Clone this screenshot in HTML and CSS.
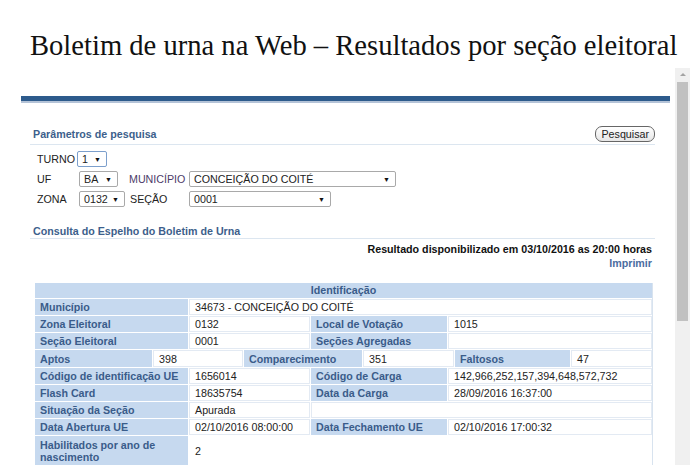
FILE: index.html
```html
<!DOCTYPE html>
<html lang="pt-BR">
<head>
    <meta charset="UTF-8">
    <meta name="viewport" content="width=device-width, initial-scale=1.0">
    <title>Boletim de urna na Web</title>
    <link rel="stylesheet" href="styles.css">
</head>
<body>
    <h1 class="title">Boletim de urna na Web &ndash; Resultados por seção eleitoral</h1>

    <div class="frame">
        <div class="page">
            <div class="topbar"></div>

            <div class="section">
                <div class="section-head">
                    <span>Parâmetros de pesquisa</span>
                    <button class="btn" type="button">Pesquisar</button>
                </div>

                <div class="params">
                    <div class="param-row">
                        <span class="lbl">TURNO</span>
                        <div class="select sel-turno focus"><span>1</span><i>&#9660;</i></div>
                    </div>
                    <div class="param-row">
                        <span class="lbl lbl-first">UF</span>
                        <div class="select sel-uf"><span>BA</span><i>&#9660;</i></div>
                        <span class="lbl lbl-mun">MUNICÍPIO</span>
                        <div class="select sel-mun"><span>CONCEIÇÃO DO COITÉ</span><i>&#9660;</i></div>
                    </div>
                    <div class="param-row">
                        <span class="lbl lbl-first">ZONA</span>
                        <div class="select sel-zona"><span>0132</span><i>&#9660;</i></div>
                        <span class="lbl lbl-secao">SEÇÃO</span>
                        <div class="select sel-secao"><span>0001</span><i>&#9660;</i></div>
                    </div>
                </div>

                <div class="section-head head-2">
                    <span>Consulta do Espelho do Boletim de Urna</span>
                </div>

                <div class="result">Resultado disponibilizado em 03/10/2016 as 20:00 horas</div>
                <div class="print"><a href="#">Imprimir</a></div>

                <div class="bu">
                    <div class="bu-head">Identificação</div>

                    <div class="bu-row">
                        <div class="c-lbl">Município</div>
                        <div class="c-val span-3">34673 - CONCEIÇÃO DO COITÉ</div>
                    </div>
                    <div class="bu-row">
                        <div class="c-lbl">Zona Eleitoral</div>
                        <div class="c-val">0132</div>
                        <div class="c-lbl">Local de Votação</div>
                        <div class="c-val">1015</div>
                    </div>
                    <div class="bu-row">
                        <div class="c-lbl">Seção Eleitoral</div>
                        <div class="c-val">0001</div>
                        <div class="c-lbl">Seções Agregadas</div>
                        <div class="c-val"></div>
                    </div>
                    <div class="bu-row row-6">
                        <div class="c-lbl">Aptos</div>
                        <div class="c-val">398</div>
                        <div class="c-lbl">Comparecimento</div>
                        <div class="c-val">351</div>
                        <div class="c-lbl">Faltosos</div>
                        <div class="c-val">47</div>
                    </div>
                    <div class="bu-row">
                        <div class="c-lbl">Código de identificação UE</div>
                        <div class="c-val">1656014</div>
                        <div class="c-lbl">Código de Carga</div>
                        <div class="c-val">142,966,252,157,394,648,572,732</div>
                    </div>
                    <div class="bu-row">
                        <div class="c-lbl">Flash Card</div>
                        <div class="c-val">18635754</div>
                        <div class="c-lbl">Data da Carga</div>
                        <div class="c-val">28/09/2016 16:37:00</div>
                    </div>
                    <div class="bu-row">
                        <div class="c-lbl">Situação da Seção</div>
                        <div class="c-val">Apurada</div>
                        <div class="c-val span-2"></div>
                    </div>
                    <div class="bu-row">
                        <div class="c-lbl">Data Abertura UE</div>
                        <div class="c-val">02/10/2016 08:00:00</div>
                        <div class="c-lbl">Data Fechamento UE</div>
                        <div class="c-val">02/10/2016 17:00:32</div>
                    </div>
                    <div class="bu-row row-tall">
                        <div class="c-lbl">Habilitados por ano de nascimento</div>
                        <div class="c-val no-border">2</div>
                    </div>
                </div>
            </div>
        </div>

        <div class="scrollbar">
            <div class="scroll-arrow"></div>
            <div class="scroll-thumb"></div>
        </div>
    </div>
</body>
</html>
```

FILE: styles.css
```css
html, body {
    margin: 0;
    padding: 0;
}

body {
    width: 700px;
    height: 465px;
    overflow: hidden;
    background-color: #fff;
    font-family: "Liberation Sans", Arial, sans-serif;
    font-size: 10.7px;
    color: #222;
}

.title {
    margin: 0;
    padding: 30px 0 0 30px;
    font-family: "Liberation Serif", "Times New Roman", serif;
    font-size: 28.6px;
    line-height: 32px;
    font-weight: normal;
    color: #111;
    white-space: nowrap;
}

.frame {
    display: flex;
    margin-top: 6px;
    height: 397px;
}

.page {
    width: 675px;
}

.topbar {
    margin: 28px 5px 0 21px;
    height: 5px;
    background-color: #2d5b8c;
    border-bottom: 2px solid #b4c3d7;
}

.section {
    margin-left: 30px;
    width: 625px;
}

.section-head {
    display: flex;
    justify-content: space-between;
    align-items: center;
    margin-top: 23px;
    height: 16px;
    padding: 0 0 2px 3px;
    border-bottom: 1px solid #dce6f0;
    font-weight: bold;
    color: #3d5f8c;
}

.head-2 {
    margin-top: 17px;
    height: 14px;
    padding-bottom: 0;
}

.btn {
    height: 16px;
    padding: 0 5px;
    border: 1px solid #666;
    border-radius: 7px;
    background: linear-gradient(#ffffff, #e6e6e6);
    font-family: "Liberation Sans", Arial, sans-serif;
    font-size: 10.7px;
    color: #222;
    line-height: 13px;
}

.params {
    display: flex;
    flex-direction: column;
    gap: 4px;
    margin-top: 6px;
    padding-left: 7px;
}

.param-row {
    display: flex;
    align-items: center;
    height: 16px;
}

.lbl {
    color: #222;
    padding-right: 2px;
}

.lbl-first {
    width: 40px;
}

.lbl-mun {
    width: 58px;
    margin-left: 11px;
    color: #4d3b69;
}

.lbl-secao {
    width: 57px;
    margin-left: 5px;
}

.select {
    display: flex;
    justify-content: space-between;
    align-items: center;
    box-sizing: border-box;
    height: 16px;
    padding: 0 5px 0 4px;
    border: 1px solid #a9a9a9;
    border-radius: 2px;
    background-color: #fff;
    color: #222;
}

.select i {
    font-style: normal;
    font-size: 7px;
    color: #111;
}

.select.focus {
    border-color: #7c9fcc;
}

.sel-turno { width: 30px; }
.sel-uf { width: 39px; }
.sel-mun { width: 207px; }
.sel-zona { width: 46px; }
.sel-secao { width: 142px; }

.result {
    margin-top: 3px;
    padding-right: 3px;
    text-align: right;
    font-weight: bold;
    line-height: 14px;
    color: #111;
}

.print {
    padding-right: 3px;
    text-align: right;
    line-height: 14px;
}

.print a {
    color: #4b6d9f;
    font-weight: bold;
    text-decoration: none;
}

.bu {
    display: flex;
    flex-direction: column;
    gap: 1px;
    margin: 13px 0 0 5px;
    width: 617px;
    height: 200px;
    border-right: 1px solid #d8e3ef;
}

.bu-head {
    height: 15px;
    line-height: 15px;
    background-color: #c6d9ef;
    text-align: center;
    font-weight: bold;
    color: #3a5c8a;
}

.bu-row {
    display: grid;
    grid-template-columns: 153px 121px 136px 1fr;
    column-gap: 1px;
    height: 16px;
}

.bu-row.row-6 {
    grid-template-columns: 117px 90px 118px 91px 115px 1fr;
    height: 17px;
}

.bu-row.row-tall {
    height: 34px;
}

.c-lbl, .c-val {
    box-sizing: border-box;
    padding: 0 5px;
    display: flex;
    align-items: center;
    white-space: nowrap;
}

.c-lbl {
    background-color: #c6d9ef;
    font-weight: bold;
    color: #3a5c8a;
}

.c-val {
    background-color: #fff;
    border: 1px solid #e3eaf3;
    color: #222;
}

.c-val.no-border {
    border-color: transparent;
}

.row-tall .c-lbl {
    white-space: normal;
    line-height: 12px;
    align-items: flex-start;
    padding-top: 3px;
}

.row-tall .c-val {
    align-items: flex-start;
    padding-top: 8px;
}

.span-3 { grid-column: span 3; }
.span-2 { grid-column: span 2; }

.scrollbar {
    display: flex;
    flex-direction: column;
    width: 15px;
    background-color: #f0f0f0;
}

.scroll-arrow {
    position: relative;
    height: 14px;
}

.scroll-arrow::after {
    content: "";
    position: absolute;
    left: 5px;
    top: 5px;
    border-left: 3px solid transparent;
    border-right: 3px solid transparent;
    border-bottom: 3px solid #a3a3a3;
}

.scroll-thumb {
    margin: 0 2px;
    height: 239px;
    background-color: #c1c1c1;
}
```
